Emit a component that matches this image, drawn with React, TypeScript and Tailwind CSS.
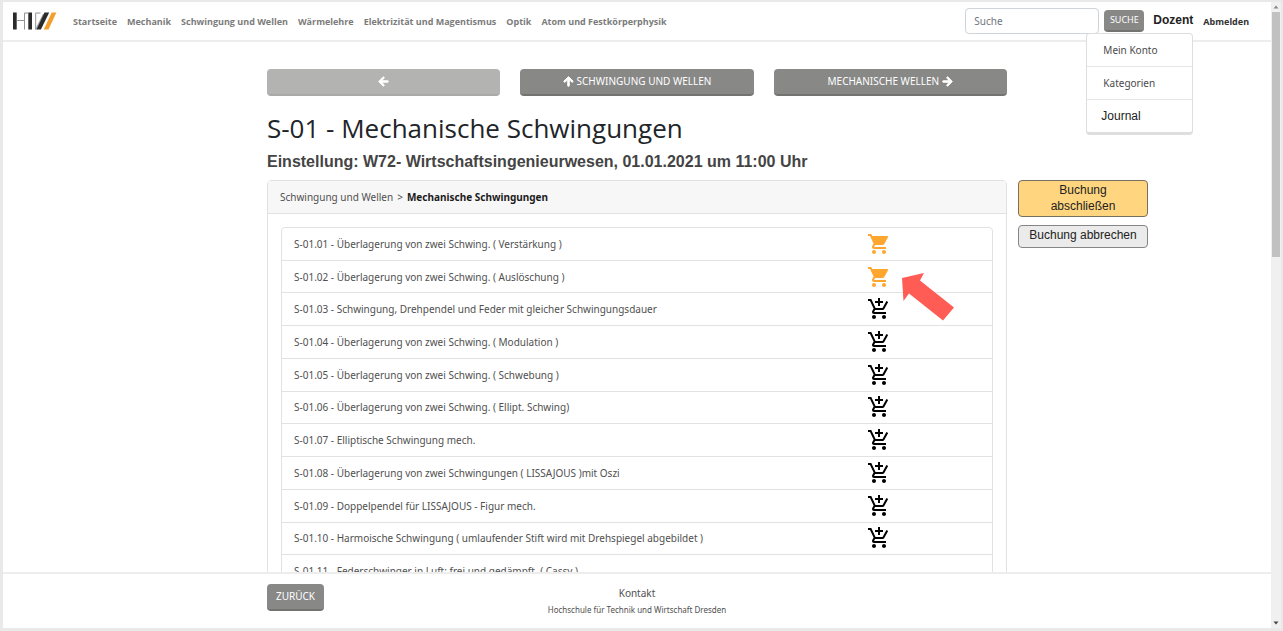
import { FaArrowLeft, FaArrowRight, FaArrowUp } from "react-icons/fa";
import { MdAddShoppingCart, MdShoppingCart } from "react-icons/md";

const navItems = [
  "Startseite",
  "Mechanik",
  "Schwingung und Wellen",
  "Wärmelehre",
  "Elektrizität und Magentismus",
  "Optik",
  "Atom und Festkörperphysik",
];

type Status = "booked" | "free" | "none";

const experiments: { title: string; status: Status }[] = [
  { title: "S-01.01 - Überlagerung von zwei Schwing. ( Verstärkung )", status: "booked" },
  { title: "S-01.02 - Überlagerung von zwei Schwing. ( Auslöschung )", status: "booked" },
  { title: "S-01.03 - Schwingung, Drehpendel und Feder mit gleicher Schwingungsdauer", status: "free" },
  { title: "S-01.04 - Überlagerung von zwei Schwing. ( Modulation )", status: "free" },
  { title: "S-01.05 - Überlagerung von zwei Schwing. ( Schwebung )", status: "free" },
  { title: "S-01.06 - Überlagerung von zwei Schwing. ( Ellipt. Schwing)", status: "free" },
  { title: "S-01.07 - Elliptische Schwingung mech.", status: "free" },
  { title: "S-01.08 - Überlagerung von zwei Schwingungen ( LISSAJOUS )mit Oszi", status: "free" },
  { title: "S-01.09 - Doppelpendel für LISSAJOUS - Figur mech.", status: "free" },
  { title: "S-01.10 - Harmoische Schwingung ( umlaufender Stift wird mit Drehspiegel abgebildet )", status: "free" },
  { title: "S-01.11 - Federschwinger in Luft: frei und gedämpft. ( Cassy )", status: "none" },
];

function Logo() {
  return (
    <svg viewBox="0 0 44 18" className="h-[18px] w-11 shrink-0" aria-hidden="true">
      <path d="M0 .5h3.700v17H0z M15.300 .5h3.700v17h-3.700z" fill="#2b2b2b" />
      <path d="M3.700 8.500h7.800M15.300 1H11.500V17.500M27.500 1H22.700V17.500L30.500 2" fill="none" stroke="#888" strokeWidth=".9" />
      <path d="M31.500 .5h4.700L27.900 17.500h-4.500z" fill="#2b2b2b" />
      <path d="M38.700 .5h4.700L35.500 17.500h-4.700z" fill="#f59e2c" />
    </svg>
  );
}

function Header() {
  return (
    <header className="flex h-10 shrink-0 items-center border-b-2 border-[#ededed] pl-[10px] pr-[22px]">
      <a href="#home" aria-label="HTW Dresden">
        <Logo />
      </a>
      <nav className="ml-4 flex gap-[10px] whitespace-nowrap pt-[1px] font-['Open_Sans',sans-serif] text-[9px] font-bold text-[#7b7b7b]">
        {navItems.map((item) => (
          <a key={item} href="#nav">
            {item}
          </a>
        ))}
      </nav>
      <form className="ml-auto flex items-center gap-[5px]" onSubmit={(e) => e.preventDefault()}>
        <input
          type="search"
          aria-label="Suche"
          placeholder="Suche"
          className="h-[26px] w-[134px] rounded-sm border border-[#ced4da] px-2 text-[10px] placeholder:text-[#6f767c]"
        />
        <button className="h-[22px] w-10 rounded-sm border-b-2 border-[#737372] bg-[#888887] pb-[1px] text-[9px] text-white">
          SUCHE
        </button>
      </form>
      <div className="relative ml-[9px]">
        <button className="block pb-[2px] font-['Liberation_Sans',sans-serif] text-xs font-bold leading-4 text-[#222]">
          Dozent
        </button>
        <ul className="absolute right-0 top-[21px] z-10 w-[107px] divide-y divide-[#e6e6e6] rounded-sm border border-b-3 border-[#dedede] bg-white text-[10px] text-[#4a4a4a]">
          <li>
            <a href="#konto" className="block px-4 leading-8">Mein Konto</a>
          </li>
          <li>
            <a href="#kategorien" className="block px-4 leading-8">Kategorien</a>
          </li>
          <li>
            <a href="#journal" className="block px-[14px] font-['Liberation_Sans',sans-serif] text-xs leading-8 text-[#222]">
              Journal
            </a>
          </li>
        </ul>
      </div>
      <a href="#abmelden" className="ml-[10px] pt-[1px] text-[9px] font-bold text-[#333]">
        Abmelden
      </a>
    </header>
  );
}

function Pager() {
  return (
    <div className="grid grid-cols-3 gap-5 text-[10px] text-white">
      <button disabled aria-label="Vorherige Kategorie" className="flex h-[27px] items-center justify-center rounded-sm border-b-2 border-[#a9a9a8] bg-[#b3b3b2]">
        <FaArrowLeft className="size-[11px] stroke-white stroke-[40]" />
      </button>
      <button className="flex h-[27px] items-center justify-center gap-[3px] rounded-sm border-b-2 border-[#737372] bg-[#888887]">
        <FaArrowUp className="size-[11px] stroke-white stroke-[40]" /> SCHWINGUNG UND WELLEN
      </button>
      <button className="flex h-[27px] items-center justify-center gap-[3px] rounded-sm border-b-2 border-[#737372] bg-[#888887]">
        MECHANISCHE WELLEN <FaArrowRight className="size-[11px] stroke-white stroke-[40]" />
      </button>
    </div>
  );
}

function ExperimentList() {
  return (
    <ul className="relative grid min-h-[362px] auto-rows-fr rounded-sm border border-[#e2e2e2]">
      {experiments.map(({ title, status }) => (
        <li key={title} className="flex items-center border-b border-[#e2e2e2] pl-3 pr-[101px] last:border-b-0">
          <a href="#versuch" className="flex-1 whitespace-nowrap leading-4">
            {title}
          </a>
          {status !== "none" && (
            <button aria-label={status === "booked" ? "Im Warenkorb" : "In den Warenkorb"} className="shrink-0">
              {status === "booked" ? (
                <MdShoppingCart className="size-6 text-[#ffa62e]" />
              ) : (
                <MdAddShoppingCart className="size-6 text-black" />
              )}
            </button>
          )}
        </li>
      ))}
      <li className="pointer-events-none absolute left-[620px] top-[45px]" aria-hidden="true">
        <svg viewBox="0 0 52 48" className="h-12 w-[52px]">
          <path d="M0 5L22 0L18 7.500L52 34.500L41 47.500L7 20.500L1.500 28z" fill="#ff5c55" />
        </svg>
      </li>
    </ul>
  );
}

function Scrollbar() {
  return (
    <div className="flex w-[10px] shrink-0 flex-col items-center bg-[#f0f0f0]" aria-hidden="true">
      <svg viewBox="0 0 10 10" className="size-[10px]">
        <path d="M5 3.500L7.500 6.500H2.500z" fill="#8a8a8a" />
      </svg>
      <div className="h-[245px] w-2 bg-[#c1c1c1]" />
      <svg viewBox="0 0 10 10" className="mt-auto size-[10px]">
        <path d="M2.500 3.500H7.500L5 6.500z" fill="#444" />
      </svg>
    </div>
  );
}

export default function App() {
  return (
    <div className="flex h-screen border-b-3 border-l-3 border-r-2 border-t-2 border-[#e9e9e9] bg-white font-['Noto_Sans',sans-serif] text-[10px] text-[#505050]">
      <div className="flex min-w-0 flex-1 flex-col">
        <Header />
        <main className="grid min-h-0 flex-1 grid-cols-[1fr_minmax(0,740px)_1fr] overflow-hidden">
          <div className="col-start-2 pt-[27px]">
            <Pager />
            <h1 className="mt-[14px] font-['Open_Sans',sans-serif] text-[26px] font-medium leading-9 text-[#212529]">
              S-01 - Mechanische Schwingungen
            </h1>
            <h2 className="mt-[6px] font-['Liberation_Sans',sans-serif] text-base font-bold leading-5 text-[#444]">
              Einstellung: W72- Wirtschaftsingenieurwesen, 01.01.2021 um 11:00 Uhr
            </h2>
            <div className="mt-2 flex">
              <section className="w-full shrink-0 rounded-sm border border-[#e2e2e2]">
                <nav className="border-b border-[#e2e2e2] bg-[#f7f7f7] px-3 leading-8">
                  <a href="#wellen">Schwingung und Wellen</a>
                  <span className="mx-1">&gt;</span>
                  <a href="#schwingungen" className="font-bold text-[#1c1c1c]">
                    Mechanische Schwingungen
                  </a>
                </nav>
                <div className="p-[13px]">
                  <ExperimentList />
                </div>
              </section>
              <aside className="ml-[11px] flex w-[130px] shrink-0 flex-col gap-2 self-start font-['Liberation_Sans',sans-serif] text-xs leading-4 text-[#222]">
                <button className="rounded-sm border border-[#77705f] bg-[#ffd57f] px-6 pb-[2px] pt-[1px]">Buchung abschließen</button>
                <button className="rounded-sm border border-[#858585] bg-[#ebebeb] pb-1 pt-[1px]">Buchung abbrechen</button>
              </aside>
            </div>
          </div>
        </main>
        <footer className="grid h-14 shrink-0 grid-cols-[1fr_minmax(0,740px)_1fr] border-t-2 border-[#ededed]">
          <div className="relative col-start-2 pt-[10px]">
            <button className="absolute left-0 top-[10px] h-[27px] w-[57px] rounded-sm border-b-2 border-[#737372] bg-[#888887] text-[10px] text-white">
              ZURÜCK
            </button>
            <div className="text-center">
              <p className="leading-[18px]">Kontakt</p>
              <p className="text-[8px] leading-4">Hochschule für Technik und Wirtschaft Dresden</p>
            </div>
          </div>
        </footer>
      </div>
      <Scrollbar />
    </div>
  );
}
